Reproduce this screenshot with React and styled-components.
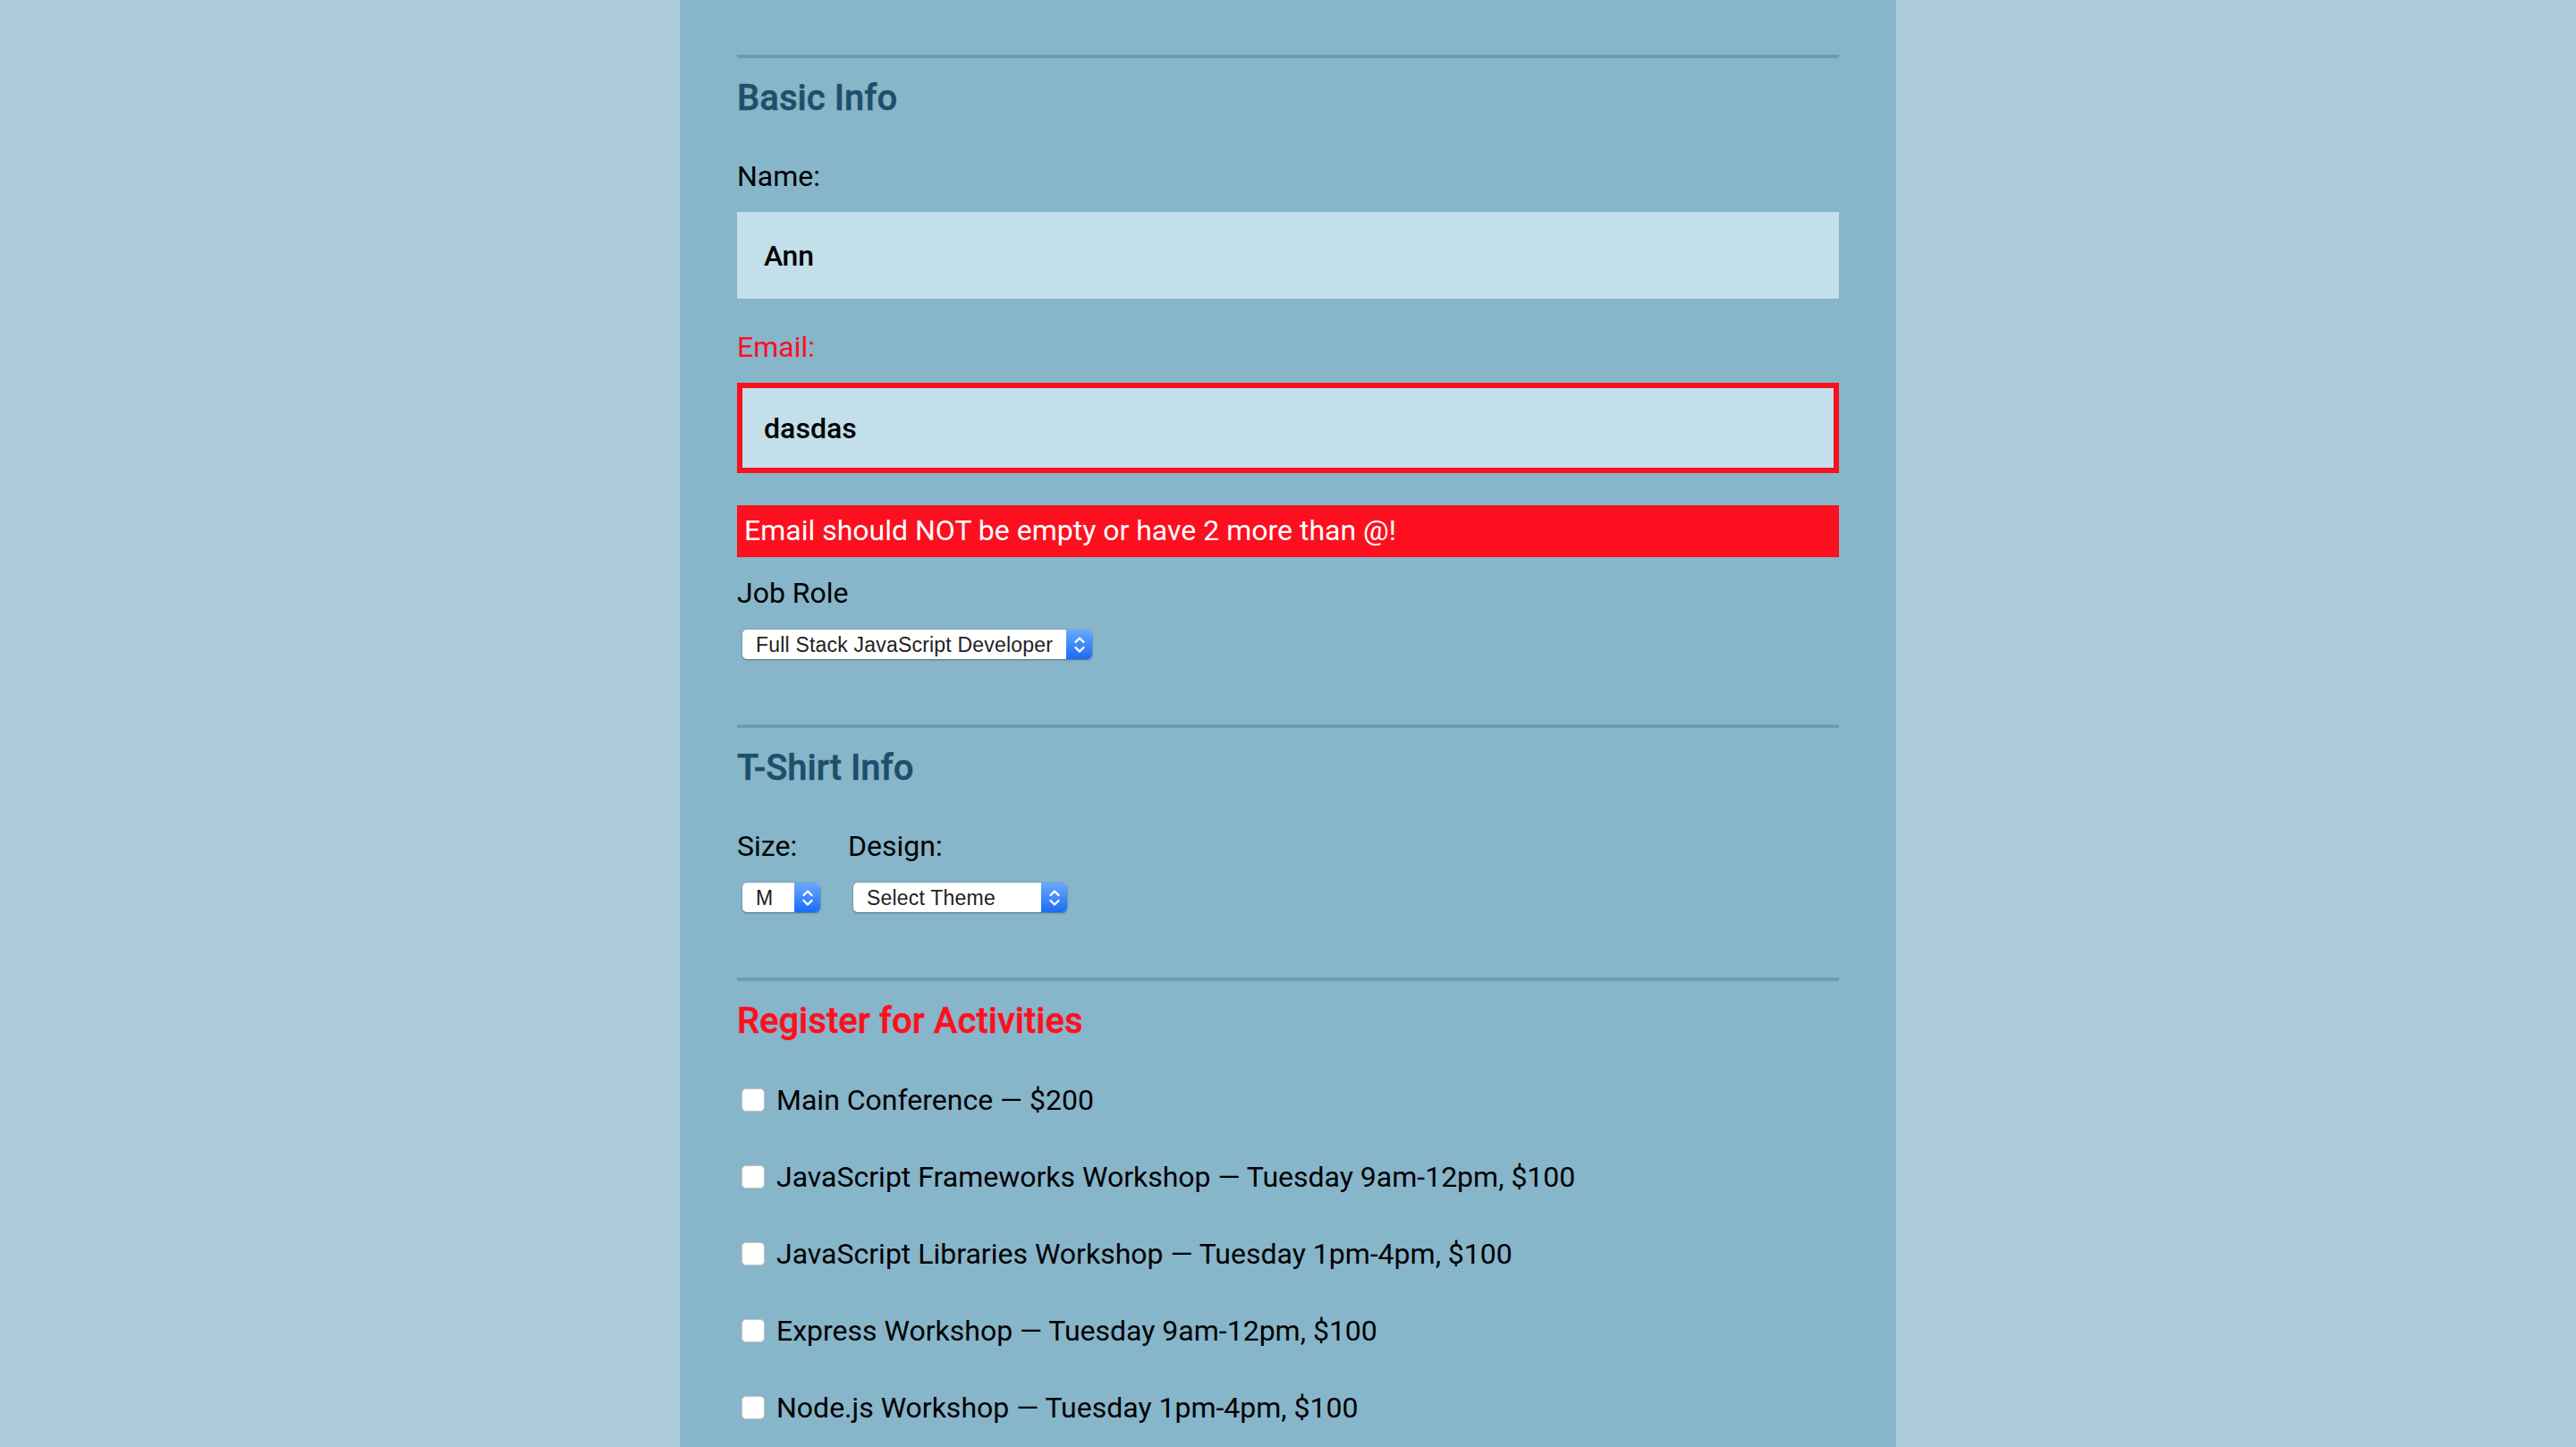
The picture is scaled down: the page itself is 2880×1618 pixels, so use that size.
import React from 'react';
import styled, { createGlobalStyle } from 'styled-components';

const GlobalStyle = createGlobalStyle`
  html, body {
    margin: 0;
    padding: 0;
  }
  body {
    background: #adcad9;
    font-family: Roboto, "Liberation Sans", sans-serif;
    color: #000;
  }
`

const activities = [
  'Main Conference — $200',
  'JavaScript Frameworks Workshop — Tuesday 9am-12pm, $100',
  'JavaScript Libraries Workshop — Tuesday 1pm-4pm, $100',
  'Express Workshop — Tuesday 9am-12pm, $100',
  'Node.js Workshop — Tuesday 1pm-4pm, $100',
  'Build tools Workshop — Wednesday 9am-12pm, $100',
  'npm Workshop — Wednesday 1pm-4pm, $100',
];

const Arrows = () => (
  <svg width="14" height="22" viewBox="0 0 14 22" fill="none" stroke="#fff" strokeWidth="2.4" strokeLinecap="round" strokeLinejoin="round">
    <polyline points="2.5,8 7,3.5 11.5,8" />
    <polyline points="2.5,14 7,18.5 11.5,14" />
  </svg>
);

const Select = ({ width, children }) => (
  <SelectBox>
    <NativeSelect $width={width}>{children}</NativeSelect>
    <SelectArrow><Arrows /></SelectArrow>
  </SelectBox>
);

class App extends React.Component {
  render() {
    return (
      <Page>
        <GlobalStyle />
        <Panel onSubmit={e => e.preventDefault()}>
          <Section>
            <Legend>Basic Info</Legend>
            <Label htmlFor="name">Name:</Label>
            <TextInput id="name" type="text" defaultValue="Ann" />
            <Label htmlFor="mail" $error>Email:</Label>
            <TextInput id="mail" type="email" defaultValue="dasdas" $error />
            <ErrorMessage>Email should NOT be empty or have 2 more than @!</ErrorMessage>
            <Label htmlFor="title">Job Role</Label>
            <Select width={362}>
              <option>Full Stack JavaScript Developer</option>
              <option>Front End Developer</option>
              <option>Back End Developer</option>
              <option>Other</option>
            </Select>
          </Section>

          <Section>
            <Legend>T-Shirt Info</Legend>
            <ShirtRow>
              <ShirtCol>
                <Label htmlFor="size">Size:</Label>
                <Select width={58}>
                  <option>M</option>
                  <option>S</option>
                  <option>L</option>
                  <option>XL</option>
                </Select>
              </ShirtCol>
              <ShirtCol>
                <Label htmlFor="design">Design:</Label>
                <Select width={210}>
                  <option>Select Theme</option>
                  <option>Theme - JS Puns</option>
                  <option>Theme - I ♥ JS</option>
                </Select>
              </ShirtCol>
            </ShirtRow>
          </Section>

          <Section>
            <Legend $error>Register for Activities</Legend>
            <ActivityList>
              {activities.map(a => (
                <Activity key={a}>
                  <Checkbox type="checkbox" />
                  {a}
                </Activity>
              ))}
            </ActivityList>
          </Section>
        </Panel>
      </Page>
    );
  }
}

export default App;

const Page = styled.div`
  display: flex;
  justify-content: center;
  min-height: 100vh;
`
const Panel = styled.form`
  width: 1360px;
  box-sizing: border-box;
  padding: 61px 64px 80px;
  background: #87b5ca;
`
const Section = styled.section`
  border-top: 4px solid #6a9db4;
  padding-bottom: 73px;
`
const Legend = styled.h2`
  margin: 21px 0 45px;
  font-family: "Roboto Medium", Roboto, "Liberation Sans", sans-serif;
  font-size: 40px;
  font-weight: 500;
  line-height: normal;
  -webkit-text-stroke: 0.5px currentColor;
  color: ${p => (p.$error ? '#fd0f1f' : '#1e4f6a')};
`
const Label = styled.label`
  display: block;
  margin-bottom: 21px;
  font-size: 32px;
  line-height: normal;
  color: ${p => (p.$error ? '#fd0f1f' : '#000')};
`
const TextInput = styled.input`
  display: block;
  width: 100%;
  box-sizing: border-box;
  height: ${p => (p.$error ? '101px' : '97px')};
  margin: 0 0 35px;
  padding: 0 ${p => (p.$error ? '24px' : '26px')};
  border: ${p => (p.$error ? '6px solid #fd0f1f' : '4px solid #c2dfea')};
  border-radius: 0;
  background: #c2dfea;
  font-family: "Roboto Medium", Roboto, "Liberation Sans", sans-serif;
  font-size: 32px;
  font-weight: 500;
  color: #000;
  outline: none;
`
const ErrorMessage = styled.div`
  margin: 36px 0 21px;
  padding: 9px 8px 11px;
  background: #fd0f1f;
  color: #fff;
  font-size: 32px;
  line-height: normal;
`
const SelectBox = styled.div`
  display: inline-flex;
  height: 33px;
  margin: 1px 0 0 6px;
  border-radius: 5px;
  overflow: hidden;
  background: #fff;
  box-shadow: 0 1px 2px rgba(0, 0, 0, 0.35), 0 0 0 1px rgba(0, 0, 0, 0.06);
`
const NativeSelect = styled.select`
  appearance: none;
  width: ${p => p.$width}px;
  height: 100%;
  margin: 0;
  padding: 0 0 0 15px;
  border: 0;
  background: transparent;
  font-family: "Liberation Sans", Arial, sans-serif;
  font-size: 23px;
  letter-spacing: 0.2px;
  color: #222;
  outline: none;
`
const SelectArrow = styled.div`
  display: flex;
  align-items: center;
  justify-content: center;
  width: 29px;
  background: linear-gradient(#6aa9ff, #1a6cf6);
`
const ShirtRow = styled.div`
  display: flex;
  gap: 31px;
`
const ShirtCol = styled.div`
  display: flex;
  flex-direction: column;
  align-items: flex-start;
`
const ActivityList = styled.div`
  display: flex;
  flex-direction: column;
  gap: 46px;
`
const Activity = styled.label`
  display: flex;
  align-items: center;
  height: 40px;
  font-size: 32px;
`
const Checkbox = styled.input`
  appearance: none;
  width: 26px;
  height: 26px;
  margin: 0 13px 0 5px;
  border: 1px solid #c4c4c4;
  border-radius: 5px;
  background: #fff;
  flex-shrink: 0;
`
